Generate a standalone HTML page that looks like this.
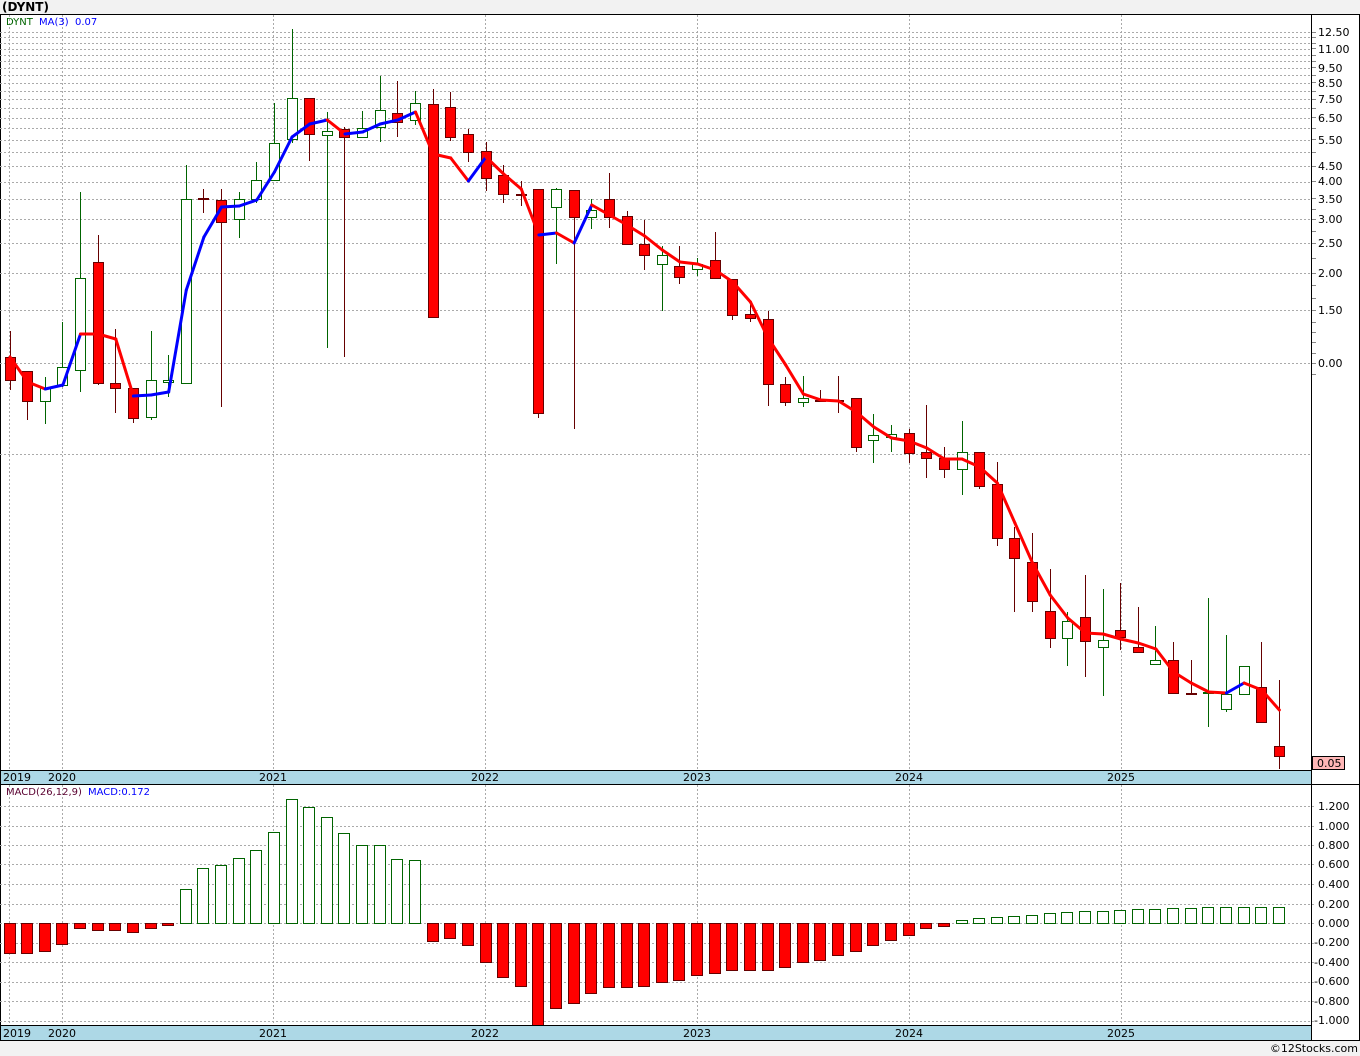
<!DOCTYPE html>
<html><head><meta charset="utf-8"><style>
html,body{margin:0;padding:0;background:#f2f2f2;width:1360px;height:1056px;overflow:hidden}
svg{display:block}
text{font-family:"DejaVu Sans","Liberation Sans",sans-serif;font-size:11px}
</style></head><body>
<svg id="s" width="1360" height="1056" xmlns="http://www.w3.org/2000/svg">
<rect x="0" y="0" width="1360" height="1056" fill="#f2f2f2"/>
<text x="2" y="11" style="font-family:'DejaVu Sans',sans-serif;font-weight:bold;font-size:12px">(DYNT)</text>
<rect x="0.5" y="14.5" width="1359" height="1026" fill="#fff" stroke="#000"/>
<g id="grid"></g>
<g id="plot"></g>
<line x1="1311.5" y1="14" x2="1311.5" y2="1041" stroke="#000"/>
<rect x="0.5" y="770.5" width="1311" height="14" fill="#add8e6" stroke="#000"/>
<rect x="0.5" y="1025.5" width="1311" height="15" fill="#add8e6" stroke="#000"/>
<line x1="1311" y1="784.5" x2="1360" y2="784.5" stroke="#000"/>
<g fill="#000">
<text x="3" y="781">2019</text><text x="48" y="781">2020</text><text x="259" y="781">2021</text><text x="471" y="781">2022</text><text x="683" y="781">2023</text><text x="895" y="781">2024</text><text x="1107" y="781">2025</text>
<text x="3" y="1037">2019</text><text x="48" y="1037">2020</text><text x="259" y="1037">2021</text><text x="471" y="1037">2022</text><text x="683" y="1037">2023</text><text x="895" y="1037">2024</text><text x="1107" y="1037">2025</text>
</g>
<text x="6" y="25" fill="#006400" style="font-size:10px">DYNT</text>
<text x="39" y="25" fill="#0000ff" style="font-size:10px">MA(3)</text>
<text x="75" y="25" fill="#0000ff" style="font-size:10px">0.07</text>
<text x="6" y="795" fill="#5a0030" style="font-size:10px">MACD(26,12,9)</text>
<text x="88" y="795" fill="#0000ff" style="font-size:10px">MACD:0.172</text>
<g fill="#000" id="lab">
<text x="1318" y="36">12.50</text><text x="1318" y="53">11.00</text><text x="1318" y="72">9.50</text><text x="1318" y="87">8.50</text><text x="1318" y="103">7.50</text><text x="1318" y="122">6.50</text><text x="1318" y="144">5.50</text><text x="1318" y="170">4.50</text><text x="1318" y="185">4.00</text><text x="1318" y="203">3.50</text><text x="1318" y="223">3.00</text><text x="1318" y="247">2.50</text><text x="1318" y="277">2.00</text><text x="1318" y="314">1.50</text><text x="1318" y="367">0.00</text>
<text x="1318" y="810">1.200</text><text x="1318" y="830">1.000</text><text x="1318" y="849">0.800</text><text x="1318" y="868">0.600</text><text x="1318" y="888">0.400</text><text x="1318" y="908">0.200</text><text x="1318" y="927">0.000</text><text x="1314" y="946">-0.200</text><text x="1314" y="966">-0.400</text><text x="1314" y="985">-0.600</text><text x="1314" y="1005">-0.800</text><text x="1314" y="1024">-1.000</text>
</g>
<rect x="1312.5" y="756.5" width="32" height="13" fill="#ffb6b6" stroke="#000"/>
<text x="1317" y="767" fill="#000">0.05</text>
<text x="1358" y="1052" fill="#000" text-anchor="end">©12Stocks.com</text>
</svg>
<script>
var NS="http://www.w3.org/2000/svg";
function el(p,t,a){var e=document.createElementNS(NS,t);for(var k in a)e.setAttribute(k,a[k]);p.appendChild(e);return e;}
var G=document.getElementById('grid'),P=document.getElementById('plot');
var hy=[32,37,43,49,55,61,68,75,83,91,99,108,118,128,140,152,166,182,199,219,243,273,310,363,454];
var tk=[32,37,43,48,55,61,67,75,82,91,99,108,117,128,139,152,166,181,198,209,219,231,243,258,273,285,298,310,322,332,342,353,363,374];
hy.forEach(function(y){el(G,'line',{x1:0,x2:1311,y1:y+.5,y2:y+.5,stroke:'#aaa','stroke-dasharray':'2,2'});});
tk.forEach(function(y){el(G,'line',{x1:1311,x2:1316,y1:y+.5,y2:y+.5,stroke:'#888'});});
var my=[806,826,845,864,884,904,923,943,962,982,1001,1021];
my.forEach(function(y){el(G,'line',{x1:0,x2:1316,y1:y+.5,y2:y+.5,stroke:'#aaa','stroke-dasharray':'2,2'});});
[9,62,273,485,697,909,1121].forEach(function(x){
 el(G,'line',{x1:x+.5,x2:x+.5,y1:15,y2:770,stroke:'#aaa','stroke-dasharray':'2,2'});
 el(G,'line',{x1:x+.5,x2:x+.5,y1:785,y2:1025,stroke:'#aaa','stroke-dasharray':'2,2'});
});
var C=[
['R',357,380,331,390],['R',371,401,371,420],['G',388,401,377,424],['G',367,385,322,387],['G',278,370,192,392],
['R',262,383,235,385],['R',383,388,329,413],['R',388,418,388,423],['G',380,417,331,420],['G',380,382,355,397],
['G',199,383,165,384],['R',198,199,189,213],['R',200,222,189,407],['G',199,219,192,238],['G',180,199,162,203],
['G',143,180,103,180],['G',98,139,29,143],['R',98,134,98,161],['G',131,135,112,348],['R',129,137,127,357],
['G',128,137,111,137],['G',110,127,76,142],['R',113,122,81,137],['G',103,120,91,125],['R',104,317,89,317],
['R',107,137,92,141],['R',134,152,129,162],['R',151,178,142,191],['R',175,194,165,203],['R',194,195,181,206],
['R',189,413,189,418],['G',189,207,188,264],['R',190,217,190,429],['G',210,217,199,229],['R',199,217,173,228],
['R',216,244,211,244],['R',244,255,220,270],['G',255,264,246,311],['R',266,277,246,284],['G',264,269,258,276],
['R',260,278,232,278],['R',279,315,279,320],['R',314,318,303,322],['R',319,384,311,406],['R',384,402,377,406],
['G',398,402,376,407],['R',400,401,390,402],['R',400,401,376,413],['R',398,447,398,452],['G',435,440,414,463],
['G',434,437,425,452],['R',433,453,429,463],['R',452,458,405,478],['R',458,469,447,478],['G',452,469,421,495],
['R',452,486,452,489],['R',484,538,462,546],['R',538,558,527,612],['R',562,601,533,612],['R',611,638,569,648],
['G',621,638,612,666],['R',617,641,575,677],['G',640,647,589,696],['R',630,637,583,650],['R',647,652,607,653],
['G',660,664,626,664],['R',660,693,642,693],['R',693,694,660,694],['G',692,693,598,727],['G',694,709,635,712],
['G',666,694,666,694],['R',687,722,642,722],['R',746,756,680,769]];
function X(i){return 9.5+17.63*i;}
var ma=[357,382,389,385,334,334,339,396,395,392,290,237,207,206,200,172,137,124,120,134,132,124,120,112,154,158,181,157,174,189,235,233,243,205,215,225,236,250,262,264,270,282,302,338,365,394,400,401,412,427,438,441,448,459,459,467,483,523,563,595,618,633,634,639,643,649,672,683,692,693,683,690,710];
C.forEach(function(c,i){
 var x=Math.round(X(i)),red=c[0]=='R',wc=red?'#600':'#006400';
 el(P,'line',{x1:x+.5,x2:x+.5,y1:c[3],y2:c[4],stroke:wc});
 var h=Math.max(1,c[2]-c[1]);
 el(P,'rect',{x:x-4.5,y:c[1]+.5,width:10,height:h,fill:red?'#f00':'#fff',stroke:wc});
});
for(var i=1;i<ma.length;i++){
 el(P,'line',{x1:X(i-1)+.5,y1:ma[i-1],x2:X(i)+.5,y2:ma[i],stroke:ma[i]>=ma[i-1]?'#f00':'#00f','stroke-width':3,'stroke-linecap':'round'});
}
var M=[953,953,951,944,928,930,930,932,928,925,
889,868,865,858,850,832,799,807,817,833,845,845,859,860,
941,938,945,962,977,986,1025,1008,1003,993,987,987,986,982,980,975,973,970,970,970,967,962,960,955,951,945,940,935,928,926,
920,918,917,916,915,913,912,911,911,910,909,909,908,908,907,907,907,907,907];
M.forEach(function(v,i){
 var x=Math.round(X(i)),z=923;
 if(v<z) el(P,'rect',{x:x-5.5,y:v+.5,width:11,height:z-v,fill:'#fff',stroke:'#006400'});
 else el(P,'rect',{x:x-5.5,y:z+.5,width:11,height:Math.max(1,v-z),fill:'#f00',stroke:'#600'});
});
</script>
</body></html>
